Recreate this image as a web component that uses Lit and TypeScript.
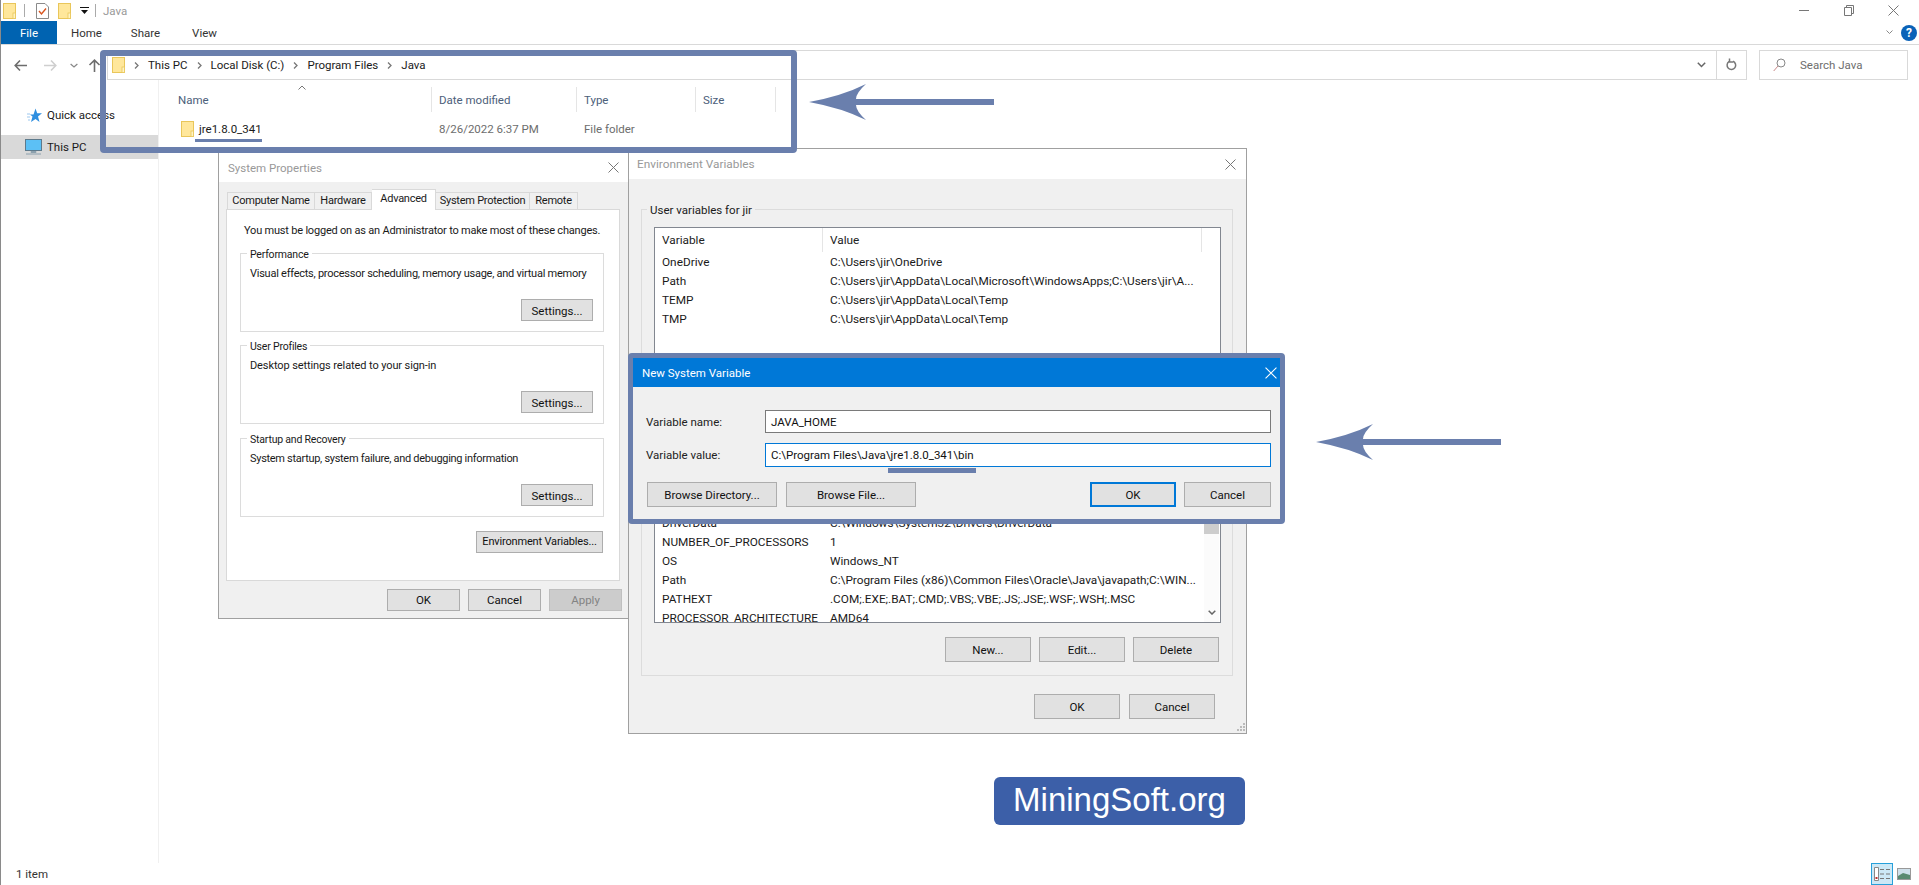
import { LitElement, html, css } from "lit";
import { customElement } from "lit/decorators.js";

const folder = () => html`<svg class="folder" viewBox="0 0 13 16"><rect x=".5" y=".5" width="12" height="15" fill="#ffe79b" stroke="#e9c65a"/><rect x="10" y="10" width="2.5" height="5.5" fill="#fff3c4" stroke="#e9c65a" stroke-width=".8"/></svg>`;
const closeX = (c = "#6b6b6b") => html`<svg class="x" viewBox="0 0 11 11"><path d="M.5.5l10 10M10.5.5l-10 10" stroke=${c} fill="none"/></svg>`;
const arrow = () => html`<svg class="arrow-svg" viewBox="0 0 185 36"><path d="M0 18Q33 12 57 0Q47 9 47 15H185V21H47Q47 27 57 36Q33 24 0 18Z" fill="#6a7fad"/></svg>`;

const userRows = [
  ["OneDrive", "C:\\Users\\jir\\OneDrive"],
  ["Path", "C:\\Users\\jir\\AppData\\Local\\Microsoft\\WindowsApps;C:\\Users\\jir\\A..."],
  ["TEMP", "C:\\Users\\jir\\AppData\\Local\\Temp"],
  ["TMP", "C:\\Users\\jir\\AppData\\Local\\Temp"],
];
const sysRows = [
  ["DriverData", "C:\\Windows\\System32\\Drivers\\DriverData"],
  ["NUMBER_OF_PROCESSORS", "1"],
  ["OS", "Windows_NT"],
  ["Path", "C:\\Program Files (x86)\\Common Files\\Oracle\\Java\\javapath;C:\\WIN..."],
  ["PATHEXT", ".COM;.EXE;.BAT;.CMD;.VBS;.VBE;.JS;.JSE;.WSF;.WSH;.MSC"],
  ["PROCESSOR_ARCHITECTURE", "AMD64"],
];

@customElement("app-root")
export class AppRoot extends LitElement {
  static styles = css`
    :host { display: block; width: 1919px; height: 885px; position: relative; overflow: hidden; background: #fff;
      font: 11.5px/16px Roboto, "Noto Sans", sans-serif; color: #1a1a1a; white-space: nowrap; }
    *, *::before, *::after { box-sizing: border-box; }
    svg { display: block; flex: none; }
    .explorer { height: 885px; display: flex; flex-direction: column; border-left: 1px solid #8a8a8a; }
    .folder { width: 13px; height: 16px; }

    .titlebar { height: 21px; display: flex; align-items: center; padding: 0 0 0 2px; color: #999; }
    .qsep { width: 1px; height: 13px; background: #aaa; }
    .titlebar .spacer, .ribbon .spacer { flex: 1; }
    .ctl { width: 45px; height: 21px; display: flex; align-items: center; justify-content: center; }
    .ctl .x { width: 11px; height: 11px; }
    .ctl.end { margin-right: 3px; }
    .qcheck { width: 13px; height: 16px; margin: 0 9px 0 11px; }
    .qdrop { width: 9px; height: 8px; margin: 0 6px 0 9px; }
    .qsep.first { margin-left: 8px; }
    .ttl { margin-left: 7px; }

    .ribbon { height: 24px; border-bottom: 1px solid #d9d9d9; display: flex; align-items: stretch; }
    .rtab { display: flex; align-items: center; width: 59px; justify-content: center; color: #333; }
    .rtab.file { background: #0063b1; color: #fff; width: 56px; }
    .rchev { width: 7px; height: 5px; align-self: center; margin-right: 8px; }
    .help { width: 16px; height: 16px; border-radius: 50%; background: #0a62b8; color: #fff; font-weight: 700; font-size: 12px; line-height: 16px; text-align: center; align-self: center; margin-right: 2px; }

    .nav { height: 35px; display: flex; padding: 5px 11px 0 0; }
    .navbtns { width: 106px; display: flex; align-items: center; height: 30px; padding-left: 13px; }
    .navbtns svg { width: 13px; height: 13px; }
    .navbtns .fwd { margin-left: 17px; }
    .navbtns .recent { margin-left: 13px; width: 8px; }
    .navbtns .up { margin-left: 10px; }
    .addr { flex: 1; height: 30px; border: 1px solid #d9d9d9; display: flex; align-items: center; padding-left: 4px; }
    .crumbs { flex: 1; display: flex; align-items: center; height: 100%; }
    .sepchev { width: 5px; height: 7px; margin: 0 9px; }
    .addr .dd { width: 30px; display: flex; align-items: center; justify-content: center; height: 100%; }
    .addr .refresh { width: 30px; border-left: 1px solid #d9d9d9; display: flex; align-items: center; justify-content: center; height: 100%; }
    .search { width: 149px; margin-left: 12px; height: 30px; border: 1px solid #d9d9d9; display: flex; align-items: center; padding-left: 13px; color: #6d6d6d; gap: 14px; }

    .main { flex: 1; display: flex; min-height: 0; }
    .side { width: 158px; padding-top: 23px; border-right: 1px solid #f0f0f0; display: flex; flex-direction: column; gap: 8px; }
    .sitem { height: 24px; display: flex; align-items: center; padding-left: 24px; gap: 5px; }
    .sitem.quick { padding-left: 26px; }
    .sitem.sel { background: #d9d9d9; }
    .list { flex: 1; padding-top: 7px; }
    .cols { display: grid; grid-template-columns: 273px 145px 119px 80px; height: 25px; color: #4c607a; }
    .col { border-right: 1px solid #e5e5e5; padding: 5px 0 0 7px; position: relative; }
    .col.name { padding-left: 19px; }
    .sort { position: absolute; left: 139px; top: -2px; width: 8px; height: 5px; }
    .row { display: grid; grid-template-columns: 273px 145px 119px; height: 24px; margin-top: 5px; align-items: center; color: #6d6d6d; }
    .row .cellname { display: flex; align-items: center; padding-left: 22px; gap: 5px; color: #1a1a1a; }
    .row .cell { padding-left: 7px; }

    .status { height: 22px; display: flex; align-items: center; padding: 0 8px 0 15px; color: #333; }
    .status .spacer { flex: 1; }
    .vbtn { width: 22px; height: 22px; background: #cce8f6; border: 1px solid #26a0da; display: flex; align-items: center; justify-content: center; }
    .vimg { width: 14px; height: 12px; margin-left: 4px; }

    .win { position: absolute; background: #f0f0f0; border: 1px solid #a0a0a0; display: flex; flex-direction: column; }
    .wtitle { background: #fff; color: #999; display: flex; align-items: center; justify-content: space-between; flex: none; }
    .wtitle .x { width: 11px; height: 11px; }

    .btn { background: #e1e1e1; border: 1px solid #adadad; color: #111; display: flex; align-items: center; justify-content: center; flex: none; }
    .btn.off { background: #ccc; border-color: #bfbfbf; color: #838383; }
    .btn.def { border: 2px solid #0078d7; }

    .sys { left: 218px; top: 152px; width: 412px; height: 467px; }
    .sys .wtitle { height: 29px; padding: 0 10px 0 9px; }
    .tabs { display: flex; align-items: flex-end; height: 20px; margin: 7px 0 0 8px; position: relative; z-index: 1; font-size: 11px; letter-spacing: -.25px; }
    .tab { height: 17px; background: #f0f0f0; border: 1px solid #d9d9d9; border-left: 0; border-bottom: 0; display: flex; align-items: center; justify-content: center; }
    .tab:first-child { border-left: 1px solid #d9d9d9; }
    .tab.on { height: 21px; background: #fff; margin-bottom: -1px; padding-bottom: 3px; }
    .t1 { width: 88px; } .t2 { width: 57px; } .t3 { width: 64px; } .t4 { width: 94px; } .t5 { width: 48px; }
    .panel { height: 372px; margin: 0 9px 0 7px; background: #fff; border: 1px solid #d9d9d9; padding: 13px 0 0 13px; display: flex; flex-direction: column; font-size: 11px; }
    .panel .lead { padding-left: 4px; height: 16px; margin-bottom: 14px; letter-spacing: -.2px; }
    .group { width: 364px; height: 79px; border: 1px solid #dcdcdc; position: relative; padding: 12px 10px 10px 9px; display: flex; flex-direction: column; letter-spacing: -.25px; }
    .group.snug { margin-top: 13px; letter-spacing: -.1px; }
    .group.wide { margin-top: 14px; letter-spacing: -.3px; }
    .legend { position: absolute; left: 6px; top: -7px; background: #fff; padding: 0 3px; font-size: 10.5px; letter-spacing: -.2px; }
    .group .set { width: 72px; height: 22px; margin-top: auto; align-self: flex-end; font-size: 11.5px; letter-spacing: 0; padding-top: 1px; }
    .envbtn { width: 127px; height: 22px; margin: 14px 0 0 236px; letter-spacing: -.17px; }
    .foot { display: flex; gap: 8px; justify-content: flex-end; margin: 8px 7px 0 0; }
    .foot .btn { width: 73px; height: 22px; }

    .env { left: 628px; top: 148px; width: 619px; height: 586px; font-size: 11.8px; }
    .env .wtitle { height: 30px; padding: 0 10px 0 8px; }
    .envgroup { width: 592px; height: 467px; margin: 30px 0 0 12px; border: 1px solid #dcdcdc; position: relative; padding: 17px 0 0 12px; flex: none; }
    .envgroup .legend { background: #f0f0f0; font-size: 11.5px; letter-spacing: 0; left: 5px; top: -8px; }
    .vlist { width: 567px; border: 1px solid #828790; background: #fff; overflow: hidden; position: relative; }
    .vlist.user { height: 133px; }
    .vlist.system { height: 238px; margin-top: 25px; }
    .vhead { display: grid; grid-template-columns: 168px 379px; height: 24px; }
    .vhead div { border-right: 1px solid #e5e5e5; padding: 4px 0 0 7px; color: #222; }
    .vrow { display: grid; grid-template-columns: 168px 1fr; height: 19px; line-height: 19px; }
    .vrow div { padding-left: 7px; overflow: hidden; }
    .urows { padding-top: 1px; }
    .srows { padding-top: 128px; }
    .sb { position: absolute; right: 1px; top: 0; bottom: 0; width: 15px; background: #fbfbfb; display: flex; flex-direction: column; align-items: center; }
    .thumb { width: 15px; height: 148px; background: #cdcdcd; }
    .sbdn { width: 8px; height: 5px; margin-top: auto; margin-bottom: 7px; }
    .listbtns { display: flex; gap: 8px; margin: 14px 0 0 291px; font-size: 11.5px; }
    .listbtns .btn { width: 86px; height: 25px; }
    .envfoot { display: flex; gap: 9px; margin: 18px 0 0 405px; font-size: 11.5px; }
    .envfoot .btn { width: 86px; height: 25px; }
    .grip { position: absolute; right: 1px; bottom: 2px; width: 8px; height: 8px; }

    .nsv { left: 628px; top: 353px; width: 657px; height: 171px; border: 5px solid #6a7fad; border-radius: 4px; }
    .nsv .wtitle { height: 29px; background: #0078d7; color: #fff; padding: 0 3px 0 9px; }
    .nsv .wtitle .x { width: 12px; height: 12px; }
    .form { display: grid; grid-template-columns: 119px 506px; row-gap: 10px; margin: 23px 0 0 13px; align-items: center; color: #222; }
    .input { height: 23px; background: #fff; border: 1px solid #7a7a7a; padding-left: 5px; display: flex; align-items: center; color: #111; }
    .input.focus { border-color: #0078d7; height: 24px; }
    .nsvbtns { display: flex; margin: 15px 9px 0 14px; gap: 9px; }
    .nsvbtns .b1 { width: 130px; height: 25px; }
    .nsvbtns .b2 { width: 87px; height: 25px; }
    .nsvbtns .b2.def { width: 86px; }
    .nsvbtns .gapper { flex: 1; }
    .nsvbtns .b2.last { margin-left: -1px; }

    .frame { position: absolute; left: 100px; top: 50px; width: 697px; height: 103px; border: 6px solid #6a7fad; border-radius: 4px; }
    .mark { position: absolute; background: #6a7fad; }
    .mark.a { left: 195px; top: 139px; width: 67px; height: 3px; }
    .mark.b { left: 888px; top: 468px; width: 88px; height: 5px; }
    .arrow { position: absolute; width: 185px; height: 36px; }
    .arrow.a { left: 809px; top: 84px; }
    .arrow.b { left: 1316px; top: 424px; }
    .arrow-svg { width: 100%; height: 100%; }
    .logo { position: absolute; left: 994px; top: 777px; width: 251px; height: 48px; border-radius: 6px; background: #3c5fa8; color: #fff;
      font: 33px/46px "Liberation Sans", Arial, sans-serif; text-align: center; }
  `;

  private chev() {
    return html`<svg class="sepchev" viewBox="0 0 5 7"><path d="M1 .5L4 3.5L1 6.5" fill="none" stroke="#777" stroke-width="1.3"/></svg>`;
  }

  private group(title: string, desc: string, cls = "") {
    return html`<div class="group ${cls}"><div class="legend">${title}</div><div>${desc}</div><div class="btn set">Settings...</div></div>`;
  }

  private vrows(rows: string[][]) {
    return rows.map((r) => html`<div class="vrow"><div>${r[0]}</div><div>${r[1]}</div></div>`);
  }

  render() {
    return html`
      <div class="explorer">
        <div class="titlebar">
          ${folder()}
          <div class="qsep first"></div>
          <svg class="qcheck" viewBox="0 0 13 16"><path d="M.5.5H9L12.5 4V15.5H.5Z" fill="#fff" stroke="#8a8a8a"/><path d="M3 8l2.5 3L10 5.5" fill="none" stroke="#d9541e" stroke-width="1.4"/></svg>
          ${folder()}
          <svg class="qdrop" viewBox="0 0 9 8"><path d="M0 0H9V1H0ZM1 3H8L4.5 7Z" fill="#111"/></svg>
          <div class="qsep"></div>
          <span class="ttl">Java</span>
          <div class="spacer"></div>
          <div class="ctl"><svg width="10" height="1"><rect width="10" height="1" fill="#777"/></svg></div>
          <div class="ctl"><svg width="10" height="11" viewBox="0 0 10 11"><path d="M.5 2.5H7.5V10.5H.5ZM2.5 2.5V.5H9.5V8.5H7.5" fill="none" stroke="#777"/></svg></div>
          <div class="ctl end">${closeX("#777")}</div>
        </div>
        <div class="ribbon">
          <div class="rtab file">File</div>
          <div class="rtab">Home</div>
          <div class="rtab">Share</div>
          <div class="rtab">View</div>
          <div class="spacer"></div>
          <svg class="rchev" viewBox="0 0 7 5"><path d="M.5.5L3.5 3.5L6.5.5" fill="none" stroke="#888"/></svg>
          <div class="help">?</div>
        </div>
        <div class="nav">
          <div class="navbtns">
            <svg viewBox="0 0 13 13"><path d="M6 1.5L1.2 6.5L6 11.5M1.5 6.5H13" fill="none" stroke="#6d6d6d" stroke-width="1.6"/></svg>
            <svg class="fwd" viewBox="0 0 13 13"><path d="M7 1.5L11.8 6.5L7 11.5M11.5 6.5H0" fill="none" stroke="#cfcfcf" stroke-width="1.6"/></svg>
            <svg class="recent" viewBox="0 0 13 13"><path d="M1 4L6.5 9L12 4" fill="none" stroke="#888" stroke-width="2"/></svg>
            <svg class="up" viewBox="0 0 13 13"><path d="M1.5 6L6.5 1.2L11.5 6M6.5 1.5V13" fill="none" stroke="#6d6d6d" stroke-width="1.6"/></svg>
          </div>
          <div class="addr">
            <div class="crumbs">
              ${folder()}
              ${this.chev()}<span>This PC</span>
              ${this.chev()}<span>Local Disk (C:)</span>
              ${this.chev()}<span>Program Files</span>
              ${this.chev()}<span>Java</span>
            </div>
            <div class="dd"><svg width="9" height="6" viewBox="0 0 9 6"><path d="M.8.8L4.5 4.5L8.2.8" fill="none" stroke="#666" stroke-width="1.5"/></svg></div>
            <div class="refresh"><svg width="11" height="14" viewBox="0 0 11 14"><path d="M7 3.2A4.3 4.3 0 1 1 3 3.6M3.5 .5V4H7" fill="none" stroke="#777" stroke-width="1.5"/></svg></div>
          </div>
          <div class="search">
            <svg width="13" height="14" viewBox="0 0 13 14"><circle cx="8" cy="5" r="4" fill="none" stroke="#888"/><path d="M5 8L.7 13" stroke="#c98a8a"/></svg>
            <span>Search Java</span>
          </div>
        </div>
        <div class="main">
          <div class="side">
            <div class="sitem quick">
              <svg width="15" height="15" viewBox="0 0 15 15"><path d="M8.5 .5L10.2 5.2H15L11 8.5L12.5 14L8.5 11L4 14L5.5 8.5L3 6.5H6.5Z" fill="#2f8fe0"/><path d="M0 6h3M0 9h3M1 12h2" stroke="#9cc7ee"/></svg>
              <span>Quick access</span>
            </div>
            <div class="sitem sel">
              <svg width="17" height="16" viewBox="0 0 17 16"><rect x=".5" y=".5" width="16" height="11" fill="#5cc0f5" stroke="#5d7a8c"/><path d="M6 12.5H11V13.5H6ZM1 15H16" stroke="#8ca0ad"/></svg>
              <span>This PC</span>
            </div>
          </div>
          <div class="list">
            <div class="cols">
              <div class="col name">Name<svg class="sort" viewBox="0 0 8 5"><path d="M.5 4.5L4 1L7.5 4.5" fill="none" stroke="#777"/></svg></div>
              <div class="col">Date modified</div>
              <div class="col">Type</div>
              <div class="col">Size</div>
            </div>
            <div class="row">
              <div class="cellname">${folder()}<span>jre1.8.0_341</span></div>
              <div class="cell">8/26/2022 6:37 PM</div>
              <div class="cell">File folder</div>
            </div>
          </div>
        </div>
        <div class="status">
          <span>1 item</span>
          <div class="spacer"></div>
          <div class="vbtn"><svg width="16" height="14" viewBox="0 0 16 14"><path d="M.5.5H4.5V13.5H.5Z" fill="#fff" stroke="#888"/><path d="M6 2.5H10M12 2.5H16M6 7H10M12 7H16M6 11.5H10M12 11.5H16" stroke="#777"/><rect x="1.5" y="10" width="2" height="2" fill="#b33"/></svg></div>
          <svg class="vimg" viewBox="0 0 14 12"><rect x=".5" y=".5" width="13" height="11" fill="#cfe0ea" stroke="#999"/><path d="M1 8L6 5L13 7V11H1Z" fill="#5a8a70"/></svg>
        </div>
      </div>

      <div class="win sys">
        <div class="wtitle"><span>System Properties</span>${closeX("#777")}</div>
        <div class="tabs">
          <div class="tab t1">Computer Name</div>
          <div class="tab t2">Hardware</div>
          <div class="tab on t3">Advanced</div>
          <div class="tab t4">System Protection</div>
          <div class="tab t5">Remote</div>
        </div>
        <div class="panel">
          <div class="lead">You must be logged on as an Administrator to make most of these changes.</div>
          ${this.group("Performance", "Visual effects, processor scheduling, memory usage, and virtual memory")}
          ${this.group("User Profiles", "Desktop settings related to your sign-in", "snug")}
          ${this.group("Startup and Recovery", "System startup, system failure, and debugging information", "wide")}
          <div class="btn envbtn">Environment Variables...</div>
        </div>
        <div class="foot">
          <div class="btn">OK</div>
          <div class="btn">Cancel</div>
          <div class="btn off">Apply</div>
        </div>
      </div>

      <div class="win env">
        <div class="wtitle"><span>Environment Variables</span>${closeX("#777")}</div>
        <div class="envgroup">
          <div class="legend">User variables for jir</div>
          <div class="vlist user">
            <div class="vhead"><div>Variable</div><div>Value</div></div>
            <div class="urows">${this.vrows(userRows)}</div>
          </div>
          <div class="vlist system">
            <div class="srows">${this.vrows(sysRows)}</div>
            <div class="sb">
              <div class="thumb"></div>
              <svg class="sbdn" viewBox="0 0 8 5"><path d="M.7.7L4 4L7.3.7" fill="none" stroke="#666" stroke-width="1.5"/></svg>
            </div>
          </div>
          <div class="listbtns">
            <div class="btn">New...</div>
            <div class="btn">Edit...</div>
            <div class="btn">Delete</div>
          </div>
        </div>
        <div class="envfoot">
          <div class="btn">OK</div>
          <div class="btn">Cancel</div>
        </div>
        <svg class="grip" viewBox="0 0 8 8"><path d="M6 0h2v2H6zM3 3h2v2H3zM6 3h2v2H6zM0 6h2v2H0zM3 6h2v2H3zM6 6h2v2H6z" fill="#bbb"/></svg>
      </div>

      <div class="win nsv">
        <div class="wtitle"><span>New System Variable</span>${closeX("#fff")}</div>
        <div class="form">
          <span>Variable name:</span>
          <div class="input">JAVA_HOME</div>
          <span>Variable value:</span>
          <div class="input focus">C:\\Program Files\\Java\\jre1.8.0_341\\bin</div>
        </div>
        <div class="nsvbtns">
          <div class="btn b1">Browse Directory...</div>
          <div class="btn b1">Browse File...</div>
          <div class="gapper"></div>
          <div class="btn b2 def">OK</div>
          <div class="btn b2 last">Cancel</div>
        </div>
      </div>

      <div class="frame"></div>
      <div class="mark a"></div>
      <div class="mark b"></div>
      <div class="arrow a">${arrow()}</div>
      <div class="arrow b">${arrow()}</div>
      <div class="logo">MiningSoft.org</div>
    `;
  }
}
